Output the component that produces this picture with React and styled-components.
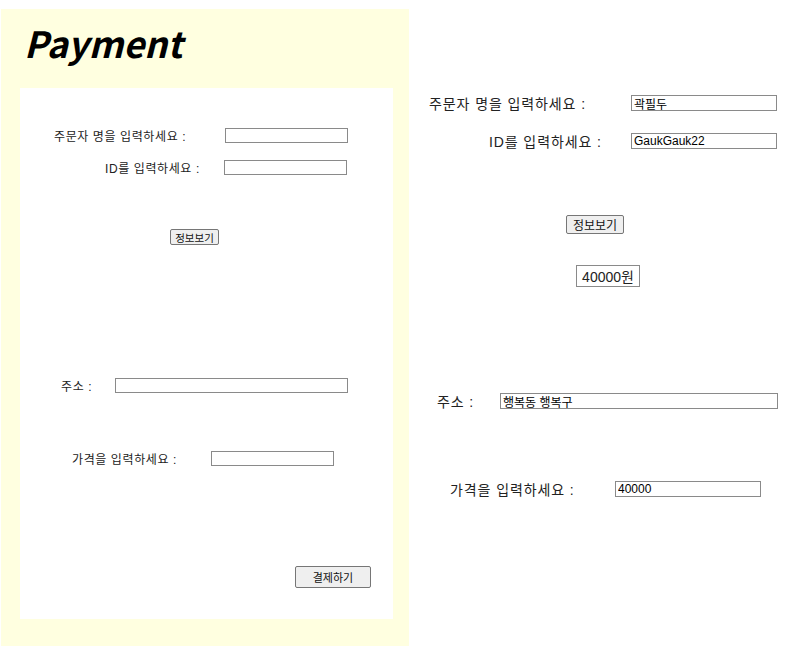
import React from 'react';
import styled, { createGlobalStyle } from 'styled-components';

const GlobalStyle = createGlobalStyle`
	body {
		margin: 0;
		background: #ffffff;
		font-family: 'Liberation Sans', 'Noto Sans CJK KR', sans-serif;
		color: #222;
	}
`;

const Page = styled.div`
	display: flex;
	align-items: flex-start;
	padding: 9px 0 0 1px;
	width: 789px;
	height: 648px;
	box-sizing: border-box;
	overflow: hidden;
`;

const Side = styled.div`
	width: 408px;
	height: 637px;
	background: #ffffe0;
	display: flex;
	flex-direction: column;
	padding: 0 16px 0 19px;
	box-sizing: border-box;
`;

const Title = styled.h1`
	margin: 9px 0 0 4px;
	height: 70px;
	font-family: 'Noto Sans CJK KR', 'Noto Sans', sans-serif;
	font-style: italic;
	font-weight: 700;
	font-size: 36px;
	line-height: 48px;
	color: #000;
`;

const Card = styled.div`
	background: #fff;
	height: 531px;
	display: flex;
	flex-direction: column;
`;

const Form = styled.div`
	flex: 1;
	display: flex;
	flex-direction: column;
`;

const Row = styled.div`
	display: flex;
	align-items: center;
	margin-top: ${(p) => p.$top}px;
	padding-left: ${(p) => p.$indent}px;
	height: ${(p) => p.$h}px;
`;

const Label = styled.label`
	width: ${(p) => p.$w}px;
	flex-shrink: 0;
	font-size: ${(p) => p.$size}px;
	letter-spacing: ${(p) => p.$track || 0}px;
	white-space: nowrap;
	color: #222;
`;

const Field = styled.input`
	width: ${(p) => p.$w}px;
	height: ${(p) => p.$h}px;
	box-sizing: border-box;
	border: 1px solid #8a8a8a;
	padding: 0 2px;
	font-family: 'Liberation Sans', 'Noto Sans CJK KR', sans-serif;
	font-size: 12px;
	color: #000;
	background: #fff;
	outline: none;
`;

const Button = styled.button`
	width: ${(p) => p.$w}px;
	height: ${(p) => p.$h}px;
	box-sizing: border-box;
	margin-left: ${(p) => p.$indent}px;
	background: #efefef;
	border: 1px solid #767676;
	border-radius: 2px;
	padding: 0;
	font-family: 'Liberation Sans', 'Noto Sans CJK KR', sans-serif;
	font-size: ${(p) => p.$size}px;
	color: #111;
`;

const ButtonRow = styled.div`
	display: flex;
	margin-top: ${(p) => p.$top}px;
`;

const Price = styled.span`
	display: inline-flex;
	align-items: center;
	justify-content: center;
	width: 64px;
	height: 22px;
	box-sizing: border-box;
	border: 1px solid #8a8a8a;
	font-size: 14px;
	color: #222;
`;

const Result = styled.div`
	flex: 1;
	display: flex;
	flex-direction: column;
	padding-top: 86px;
`;

export default function App() {
	return (
		<>
			<GlobalStyle />
			<Page>
				<Side>
					<Title>Payment</Title>
					<Card>
						<Form>
							<Row $top={40} $indent={34} $h={15}>
								<Label $w={171} $size={12} $track={0.6}>주문자 명을 입력하세요 :</Label>
								<Field $w={123} $h={15} />
							</Row>
							<Row $top={17} $indent={85} $h={15}>
								<Label $w={119} $size={12} $track={0.6}>ID를 입력하세요 :</Label>
								<Field $w={123} $h={15} />
							</Row>
							<ButtonRow $top={54}>
								<Button $indent={150} $w={49} $h={16} $size={10.5}>정보보기</Button>
							</ButtonRow>
							<Row $top={133} $indent={41} $h={15}>
								<Label $w={54} $size={12} $track={0.6}>주소 :</Label>
								<Field $w={233} $h={15} />
							</Row>
							<Row $top={58} $indent={52} $h={15}>
								<Label $w={139} $size={12} $track={0.6}>가격을 입력하세요 :</Label>
								<Field $w={123} $h={15} />
							</Row>
							<ButtonRow $top={100}>
								<Button $indent={275} $w={76} $h={22} $size={11}>결제하기</Button>
							</ButtonRow>
						</Form>
					</Card>
				</Side>
				<Result>
					<Row $top={0} $indent={20} $h={16}>
						<Label $w={202} $size={14} $track={0.9}>주문자 명을 입력하세요 :</Label>
						<Field $w={146} $h={16} defaultValue="곽필두" />
					</Row>
					<Row $top={22} $indent={80} $h={16}>
						<Label $w={142} $size={14} $track={0.9}>ID를 입력하세요 :</Label>
						<Field $w={146} $h={16} defaultValue="GaukGauk22" />
					</Row>
					<ButtonRow $top={66}>
						<Button $indent={157} $w={58} $h={19} $size={12}>정보보기</Button>
					</ButtonRow>
					<ButtonRow $top={31}>
						<Row $top={0} $indent={167} $h={22}>
							<Price>40000원</Price>
						</Row>
					</ButtonRow>
					<Row $top={106} $indent={28} $h={16}>
						<Label $w={63} $size={14} $track={0.9}>주소 :</Label>
						<Field $w={278} $h={16} defaultValue="행복동 행복구" />
					</Row>
					<Row $top={72} $indent={41} $h={16}>
						<Label $w={165} $size={14} $track={0.9}>가격을 입력하세요 :</Label>
						<Field $w={146} $h={16} defaultValue="40000" />
					</Row>
				</Result>
			</Page>
		</>
	);
}
